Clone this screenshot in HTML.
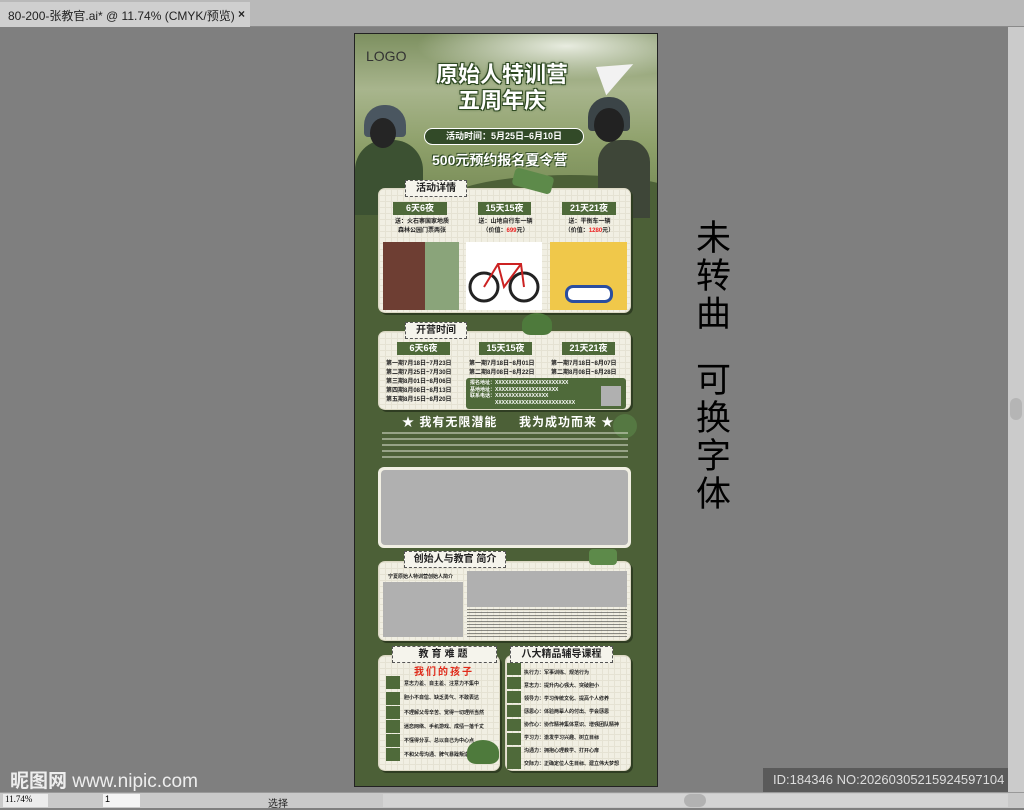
<!DOCTYPE html>
<html><head><meta charset="utf-8"><style>
*{margin:0;padding:0;box-sizing:border-box}
body{width:1024px;height:808px;overflow:hidden;background:#7f7f7f;font-family:"Liberation Sans","Noto Sans CJK SC",sans-serif;position:relative}
.a{position:absolute}
.tabbar{left:0;top:0;width:1024px;height:27px;background:#b9b9b9;border-bottom:1px solid #8a8a8a}
.tab{left:0;top:2px;width:250px;height:25px;background:#cfcfcf;font-size:12px;color:#222;padding:5px 0 0 8px;white-space:nowrap}
.card{background:#f1efe3;border-radius:7px;border:1px solid #dcd8c4;box-shadow:2px 2px 0 #2f3d22;background-image:linear-gradient(#e5e2d3 1px,transparent 1px),linear-gradient(90deg,#e5e2d3 1px,transparent 1px);background-size:6px 6px}
.lbl{background:#f5f4ec;border:1px dashed #555;font-weight:bold;color:#222;text-align:center;font-size:10px;line-height:15px}
.gh{background:#4f6a3a;color:#fff;font-weight:bold;font-size:9px;text-align:center;line-height:13px}
.t{font-size:6px;color:#222;font-weight:bold;line-height:9px;white-space:nowrap}
.w{color:#fff;font-weight:bold}
.gb{background:#b0b0b0}
.chip{background:#4f6a3a;width:14px;height:13px}
</style></head><body>
<div class="a tabbar"></div>
<div class="a tab">80-200-张教官.ai* @ 11.74% (CMYK/预览)<span style="position:absolute;left:238px;top:5px;font-weight:bold">×</span></div>
<div class="a" style="left:1008px;top:27px;width:16px;height:765px;background:#cbcbcb"></div>
<div class="a" style="left:1010px;top:398px;width:12px;height:22px;border-radius:6px;background:#b5b5b5"></div>

<!-- poster -->
<div class="a" style="left:354px;top:33px;width:304px;height:754px;background:#4c6037;border:1px solid #222;overflow:hidden">
<div class="a" style="left:0;top:0;width:302px;height:185px;background:linear-gradient(180deg,#7d9060 0%,#a8b58d 30%,#8ea06a 60%,#6f8450 100%)"></div>
<div class="a" style="left:0;top:0;width:302px;height:60px;background:radial-gradient(ellipse at 70% 20%,#e8ece0 0%,transparent 50%)"></div>
<div class="a" style="left:85px;top:141px;width:260px;height:60px;background:#4c6037;border-radius:50% 50% 0 0"></div>
<div class="a" style="left:0;top:156px;width:80px;height:40px;background:#4c6037;border-radius:0 60% 0 0"></div>
<div class="a" style="left:0;top:106px;width:68px;height:75px;background:#3c5132;border-radius:30px 30px 0 0"></div>
<div class="a" style="left:9px;top:71px;width:42px;height:32px;background:#4a5660;border-radius:20px 20px 4px 4px"></div>
<div class="a" style="left:15px;top:84px;width:26px;height:30px;background:#252525;border-radius:50%"></div>
<div class="a" style="left:243px;top:106px;width:52px;height:78px;background:#3e4638;border-radius:22px 22px 0 0"></div>
<div class="a" style="left:233px;top:63px;width:42px;height:34px;background:#3b4447;border-radius:20px 20px 4px 4px"></div>
<div class="a" style="left:239px;top:74px;width:30px;height:34px;background:#222;border-radius:50%"></div>
</div>
<div class="a" style="left:366px;top:48px;font-size:14px;color:#333">LOGO</div>
<div class="a w" style="left:412px;top:62px;width:180px;text-align:center;font-size:22px;line-height:26px;text-shadow:0 0 3px #2f4a23,1px 1px 0 #2f4a23,-1px -1px 0 #2f4a23,1px -1px 0 #2f4a23,-1px 1px 0 #2f4a23">原始人特训营<br>五周年庆</div>
<div class="a" style="left:424px;top:128px;width:160px;height:17px;border-radius:9px;background:#324a28;border:1px solid #fff;color:#fff;font-size:9px;font-weight:bold;text-align:center;line-height:15px">活动时间：5月25日–6月10日</div>
<div class="a w" style="left:432px;top:150px;font-size:14px;text-shadow:1px 1px 0 #2f4a23,-1px -1px 0 #2f4a23">500元预约报名夏令营</div>
<div class="a" style="left:600px;top:60px;width:0;height:0;border-left:36px solid #f2f2f2;border-top:10px solid transparent;border-bottom:20px solid transparent;transform:rotate(-20deg)"></div>

<!-- card1 -->
<div class="a card" style="left:378px;top:188px;width:253px;height:125px"></div>
<div class="a lbl" style="left:405px;top:180px;width:62px">活动详情</div>
<div class="a" style="left:513px;top:172px;width:40px;height:18px;background:#5d8a4a;border-radius:4px;transform:rotate(15deg)"></div>
<div class="a gh" style="left:393px;top:202px;width:54px">6天6夜</div>
<div class="a gh" style="left:478px;top:202px;width:53px">15天15夜</div>
<div class="a gh" style="left:562px;top:202px;width:54px">21天21夜</div>
<div class="a t" style="left:384px;top:218px;width:76px;text-align:center">送：火石寨国家地质<br>森林公园门票两张</div>
<div class="a t" style="left:468px;top:218px;width:75px;text-align:center">送：山地自行车一辆<br>（价值：<span style="color:#e22">699</span>元）</div>
<div class="a t" style="left:552px;top:218px;width:75px;text-align:center">送：平衡车一辆<br>（价值：<span style="color:#e22">1280</span>元）</div>
<div class="a" style="left:383px;top:242px;width:76px;height:68px;background:linear-gradient(90deg,#6e3e33 0 55%,#8aa47a 55%);"></div>
<div class="a" style="left:466px;top:242px;width:76px;height:68px;background:#fff"></div>
<svg class="a" style="left:466px;top:242px" width="76" height="68"><circle cx="18" cy="45" r="14" fill="none" stroke="#222" stroke-width="3"/><circle cx="58" cy="45" r="14" fill="none" stroke="#222" stroke-width="3"/><path d="M18 45 L32 22 L55 22 L58 45 M32 22 L38 45 L55 22" stroke="#c22" stroke-width="2" fill="none"/></svg>
<div class="a" style="left:550px;top:242px;width:77px;height:68px;background:#f0c84a"></div>
<div class="a" style="left:565px;top:285px;width:48px;height:18px;background:#fff;border-radius:8px;border:3px solid #2a4ea0"></div>

<!-- card2 -->
<div class="a card" style="left:378px;top:331px;width:253px;height:79px"></div>
<div class="a lbl" style="left:405px;top:322px;width:62px">开营时间</div>
<div class="a" style="left:522px;top:313px;width:30px;height:22px;background:#4e7a3c;border-radius:50% 50% 30% 30%"></div>
<div class="a gh" style="left:397px;top:342px;width:53px">6天6夜</div>
<div class="a gh" style="left:479px;top:342px;width:53px">15天15夜</div>
<div class="a gh" style="left:562px;top:342px;width:53px">21天21夜</div>
<div class="a t" style="left:386px;top:360px;font-size:6px">第一期7月18日~7月23日<br>第二期7月25日~7月30日<br>第三期8月01日~8月06日<br>第四期8月08日~8月13日<br>第五期8月15日~8月20日</div>
<div class="a t" style="left:469px;top:360px">第一期7月18日~8月01日<br>第二期8月08日~8月22日</div>
<div class="a t" style="left:551px;top:360px">第一期7月18日~8月07日<br>第二期8月08日~8月28日</div>
<div class="a" style="left:466px;top:378px;width:160px;height:31px;background:#4f6a3a;border-radius:3px"></div>
<div class="a t" style="left:470px;top:380px;color:#fff;font-size:5px;line-height:6.5px">报名地址：XXXXXXXXXXXXXXXXXXXXXX<br>基地地址：XXXXXXXXXXXXXXXXXXX<br>联系电话：XXXXXXXXXXXXXXXX<br>　　　　　XXXXXXXXXXXXXXXXXXXXXXXX</div>
<div class="a gb" style="left:601px;top:386px;width:20px;height:20px"></div>

<div class="a w" style="left:402px;top:413px;font-size:12px;letter-spacing:1px">★ 我有无限潜能 　 我为成功而来 ★</div>
<div class="a" style="left:613px;top:414px;width:24px;height:24px;border-radius:50%;background:#557842"></div>
<div class="a" style="left:382px;top:432px;width:246px;height:28px;background:repeating-linear-gradient(180deg,#c9d0bc 0 2px,transparent 2px 6px);opacity:.6"></div>
<div class="a" style="left:378px;top:467px;width:253px;height:81px;background:#f1efe3;border-radius:6px"></div>
<div class="a gb" style="left:381px;top:470px;width:247px;height:75px;border-radius:4px"></div>

<!-- card3 -->
<div class="a card" style="left:378px;top:561px;width:253px;height:80px"></div>
<div class="a lbl" style="left:404px;top:551px;width:102px">创始人与教官 简介</div>
<div class="a" style="left:589px;top:549px;width:28px;height:16px;background:#5d8a4a;border-radius:4px"></div>
<div class="a t" style="left:388px;top:573px;font-size:5px">宁夏原始人特训营创始人简介</div>
<div class="a gb" style="left:383px;top:582px;width:80px;height:55px"></div>
<div class="a gb" style="left:467px;top:571px;width:160px;height:36px"></div>
<div class="a" style="left:467px;top:609px;width:160px;height:28px;background:repeating-linear-gradient(180deg,#333 0 1px,transparent 1px 3px);opacity:.55"></div>

<!-- card4 -->
<div class="a card" style="left:378px;top:655px;width:122px;height:116px"></div>
<div class="a card" style="left:505px;top:655px;width:126px;height:116px"></div>
<div class="a lbl" style="left:392px;top:646px;width:105px;letter-spacing:3px">教育难题</div>
<div class="a lbl" style="left:510px;top:646px;width:103px">八大精品辅导课程</div>
<div class="a" style="left:414px;top:663px;color:#e02a1a;font-weight:bold;font-size:10px;letter-spacing:2px">我们的孩子</div>
<div class="a chip" style="left:386px;top:676px"></div><div class="a chip" style="left:386px;top:692px"></div><div class="a chip" style="left:386px;top:706px"></div><div class="a chip" style="left:386px;top:720px"></div><div class="a chip" style="left:386px;top:734px"></div><div class="a chip" style="left:386px;top:748px"></div>
<div class="a t" style="left:404px;top:677px;font-size:5px;line-height:14.3px">意志力差、自主差、注意力不集中<br>胆小不自信、缺乏勇气、不敢表达<br>不理解父母辛苦、觉得一切理所当然<br>迷恋网络、手机游戏、成绩一落千丈<br>不懂得分享、总以自己为中心点<br>不和父母沟通、脾气暴躁叛逆</div>
<div class="a" style="left:467px;top:740px;width:32px;height:24px;background:#4e7a3c;border-radius:50% 50% 30% 30%"></div>
<div class="a chip" style="left:507px;top:663px;height:12px"></div><div class="a chip" style="left:507px;top:677px;height:12px"></div><div class="a chip" style="left:507px;top:691px;height:12px"></div><div class="a chip" style="left:507px;top:705px;height:12px"></div><div class="a chip" style="left:507px;top:719px;height:12px"></div><div class="a chip" style="left:507px;top:733px;height:12px"></div><div class="a chip" style="left:507px;top:747px;height:12px"></div><div class="a chip" style="left:507px;top:759px;height:10px"></div>
<div class="a t" style="left:524px;top:667px;font-size:5px;line-height:13px">执行力：军事训练、规范行为<br>意志力：提升内心强大、突破胆小<br>领导力：学习传统文化、提高个人修养<br>感恩心：体验两辈人的付出、学会感恩<br>协作心：协作精神集体意识、增强团队精神<br>学习力：激发学习兴趣、树立目标<br>沟通力：拥抱心理教学、打开心扉<br>交际力：正确定位人生目标、建立伟大梦想</div>

<div class="a w" style="left:10px;top:766px;font-size:19px;font-weight:bold;color:#eee">昵图网 <span style="font-weight:normal">www.nipic.com</span></div>
<div class="a" style="left:763px;top:768px;width:245px;height:24px;background:#5a5a5a;color:#ddd;font-size:13px;line-height:24px;padding-left:10px">ID:184346 NO:20260305215924597104</div>
<div class="a" style="left:0;top:792px;width:1024px;height:16px;background:#c9c9c9;border-top:1px solid #999"></div>
<div class="a" style="left:3px;top:794px;width:45px;height:13px;background:#ececec;font-size:9px;padding-left:2px;font-family:'Liberation Serif',serif">11.74%</div>
<div class="a" style="left:103px;top:794px;width:37px;height:13px;background:#f4f4f4;font-size:9px;padding-left:2px">1</div>
<div class="a" style="left:268px;top:795px;font-size:10px;color:#222">选择</div>
<div class="a" style="left:383px;top:794px;width:625px;height:13px;background:#d4d4d4"></div>
<div class="a" style="left:684px;top:794px;width:22px;height:13px;border-radius:7px;background:#b2b2b2"></div>

<div class="a" style="left:696px;top:217px;font-size:35px;line-height:38px;width:40px;color:#000;font-family:'Noto Sans CJK SC',sans-serif">未<br>转<br>曲<br><div style="height:28px"></div>可<br>换<br>字<br>体</div>
</body></html>
